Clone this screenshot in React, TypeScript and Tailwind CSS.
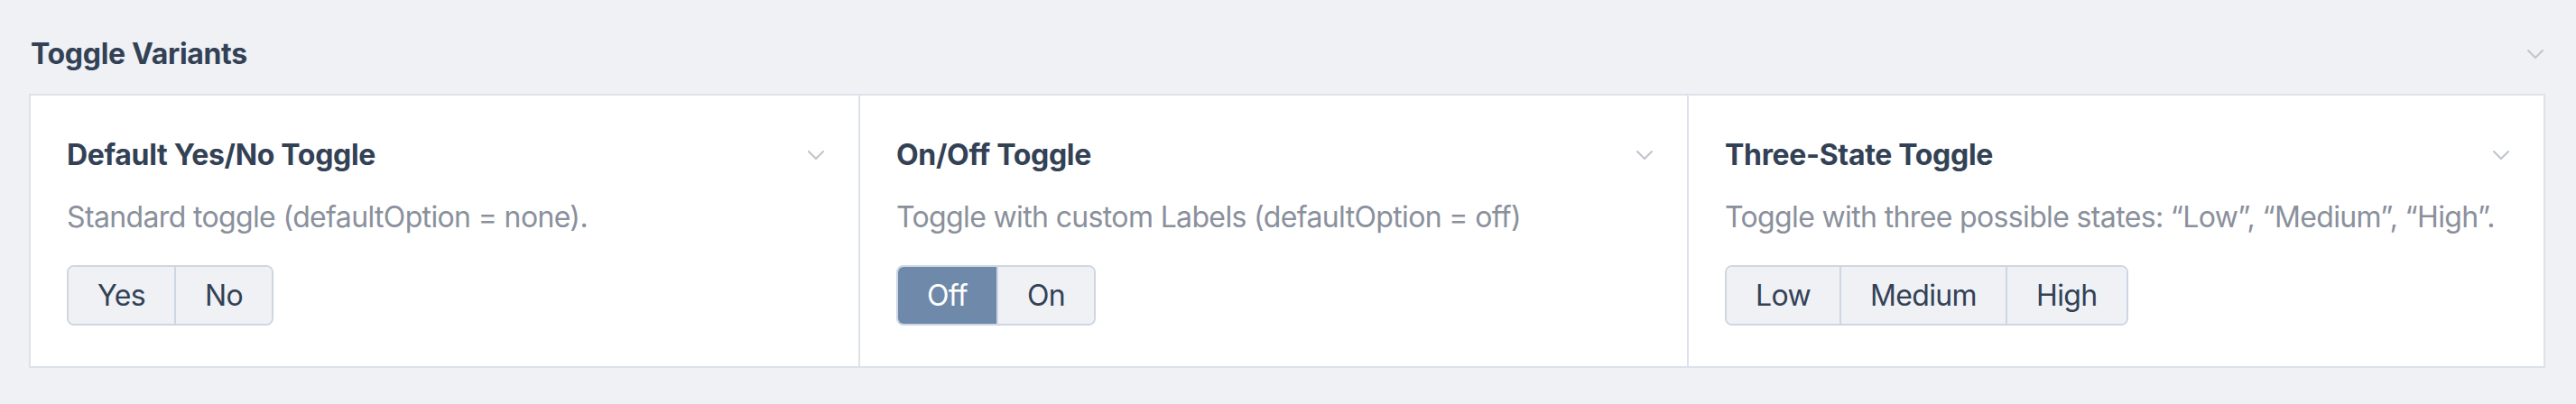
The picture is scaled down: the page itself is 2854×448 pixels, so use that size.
import React from "react";

function Chevron({ className }: { className?: string }) {
  return (
    <svg
      width="18"
      height="10"
      viewBox="0 0 18 10"
      fill="none"
      className={className}
    >
      <polyline
        points="1,1 9,9 17,1"
        stroke="currentColor"
        strokeWidth="2"
        strokeLinecap="round"
        strokeLinejoin="round"
      />
    </svg>
  );
}

type Opt = { label: string; active?: boolean };

function ToggleGroup({ options }: { options: Opt[] }) {
  return (
    <div className="flex h-[67px] w-fit overflow-hidden rounded-[8px] border-2 border-[#cdd6e2]">
      {options.map((o, i) => (
        <button
          key={o.label}
          className={
            (o.active
              ? "bg-[#6f89aa] text-white "
              : "bg-[#eff1f5] text-[#334155] ") +
            (i > 0 ? "border-l-2 border-[#cdd6e2] " : "") +
            "flex items-center justify-center px-[32px] text-[32px] leading-[48px] tracking-[-0.02em]"
          }
        >
          {o.label}
        </button>
      ))}
    </div>
  );
}

function Column({
  title,
  desc,
  options,
  className,
}: {
  title: string;
  desc: string;
  options: Opt[];
  className?: string;
}) {
  return (
    <div className={"flex flex-col pl-[40px] pr-[38px] pt-[42px] pb-[45px] " + (className ?? "")}>
      <div className="flex items-center justify-between">
        <h3 className="text-[32px] font-bold leading-[48px] tracking-[-0.01em] text-[#334155]">
          {title}
        </h3>
        <Chevron className="text-[#bfc3cb]" />
      </div>
      <p className="mt-[21px] whitespace-nowrap text-[32px] leading-[48px] tracking-[-0.02em] text-[#8a909c]">
        {desc}
      </p>
      <div className="mt-[29px]">
        <ToggleGroup options={options} />
      </div>
    </div>
  );
}

export default function App() {
  return (
    <div
      className="min-h-[448px] w-[2854px] bg-[#eff1f5] pl-[32px] pr-[34px] pt-[36px]"
      style={{ fontFamily: "Inter, 'Noto Sans', sans-serif" }}
    >
      <div className="flex items-center justify-between pl-[2px] pr-[2px]">
        <h2 className="text-[32px] font-bold leading-[48px] tracking-[-0.01em] text-[#334155]">
          Toggle Variants
        </h2>
        <Chevron className="text-[#c0c4cc]" />
      </div>
      <div className="mt-[20px] flex border-2 border-[#dde2ea] bg-white">
        <Column
          className="w-[919px] border-r-2 border-[#dde2ea]"
          title="Default Yes/No Toggle"
          desc="Standard toggle (defaultOption = none)."
          options={[{ label: "Yes" }, { label: "No" }]}
        />
        <Column
          className="w-[918px] border-r-2 border-[#dde2ea]"
          title="On/Off Toggle"
          desc="Toggle with custom Labels (defaultOption = off)"
          options={[{ label: "Off", active: true }, { label: "On" }]}
        />
        <Column
          className="min-w-0 flex-1"
          title="Three-State Toggle"
          desc="Toggle with three possible states: “Low”, “Medium”, “High”."
          options={[{ label: "Low" }, { label: "Medium" }, { label: "High" }]}
        />
      </div>
    </div>
  );
}
